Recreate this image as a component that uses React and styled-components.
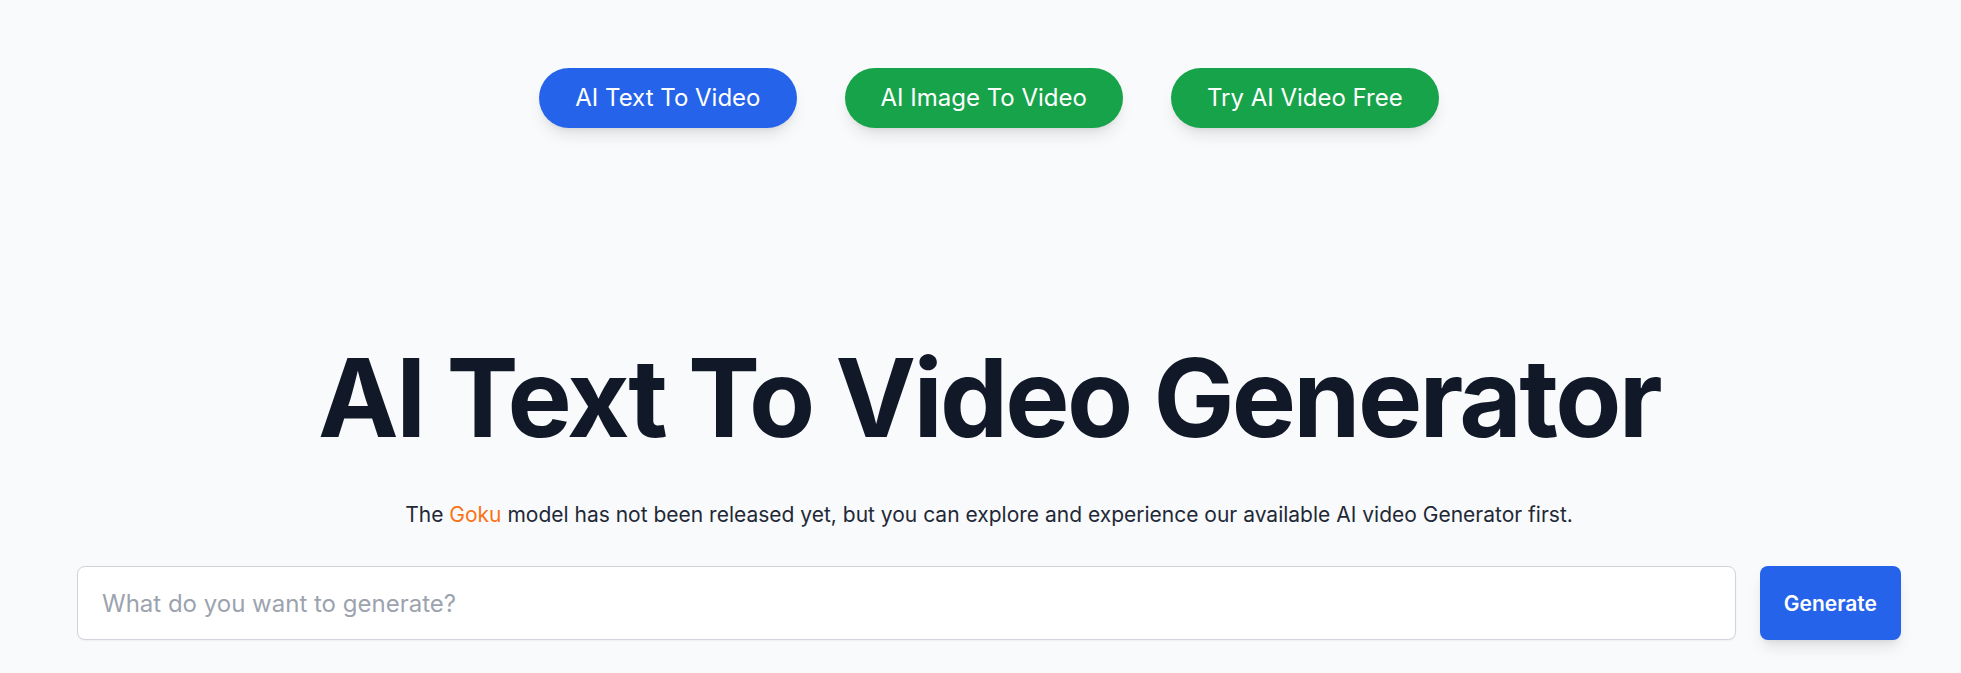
import React from "react";
import styled, { createGlobalStyle } from "styled-components";

const GlobalStyle = createGlobalStyle`
  body {
    margin: 0;
    background: #f9fafb;
    font-family: Inter, "Noto Sans", sans-serif;
  }
`;

const Page = styled.div`
  min-height: 100vh;
  padding: 0 60px 0 77px;
  background: #f9fafb;
  box-sizing: border-box;
`;

const Nav = styled.nav`
  display: flex;
  justify-content: center;
  gap: 48px;
  padding-top: 68px;
`;

const NavButton = styled.a`
  display: inline-block;
  padding: 16px 36px;
  font-size: 24px;
  line-height: 28px;
  color: #fff;
  background: ${(p) => (p.$primary ? "#2563eb" : "#16a34a")};
  border-radius: 9999px;
  text-decoration: none;
  box-shadow: 0 10px 15px -3px rgba(0, 0, 0, 0.1), 0 4px 6px -4px rgba(0, 0, 0, 0.1);
  cursor: pointer;
`;

const Hero = styled.section`
  display: flex;
  flex-direction: column;
  align-items: center;
  padding-top: 216px;
`;

const Title = styled.h1`
  margin: 0;
  font-size: 108px;
  line-height: 1;
  font-weight: 700;
  color: #111827;
  letter-spacing: -2.7px;
  white-space: nowrap;
`;

const Subtitle = styled.p`
  margin: 47px 0 0;
  font-size: 21px;
  line-height: 32px;
  color: #1f2937;
`;

const Highlight = styled.span`
  color: #f97316;
`;

const Form = styled.form`
  display: flex;
  align-items: stretch;
  gap: 24px;
  margin-top: 35px;
`;

const PromptInput = styled.input`
  flex: 1;
  height: 74px;
  box-sizing: border-box;
  padding: 0 24px;
  font-family: inherit;
  font-size: 24px;
  color: #111827;
  background: #fff;
  border: 1px solid #d1d5db;
  border-radius: 8px;
  box-shadow: 0 1px 2px rgba(0, 0, 0, 0.05);
  outline: none;

  &::placeholder {
    color: #9ca3af;
  }
`;

const GenerateButton = styled.button`
  height: 74px;
  padding: 0 24px;
  font-family: inherit;
  font-size: 21px;
  font-weight: 600;
  color: #fff;
  background: #2563eb;
  border: none;
  border-radius: 8px;
  box-shadow: 0 10px 15px -3px rgba(0, 0, 0, 0.1), 0 4px 6px -4px rgba(0, 0, 0, 0.1);
  cursor: pointer;
`;

export default function App() {
  return (
    <>
      <GlobalStyle />
      <Page>
        <Nav>
          <NavButton $primary>AI Text To Video</NavButton>
          <NavButton>AI Image To Video</NavButton>
          <NavButton>Try AI Video Free</NavButton>
        </Nav>
        <Hero>
          <Title>AI Text To Video Generator</Title>
          <Subtitle>
            The <Highlight>Goku</Highlight> model has not been released yet, but you can explore and
            experience our available AI video Generator first.
          </Subtitle>
        </Hero>
        <Form onSubmit={(e) => e.preventDefault()}>
          <PromptInput placeholder="What do you want to generate?" />
          <GenerateButton type="submit">Generate</GenerateButton>
        </Form>
      </Page>
    </>
  );
}
